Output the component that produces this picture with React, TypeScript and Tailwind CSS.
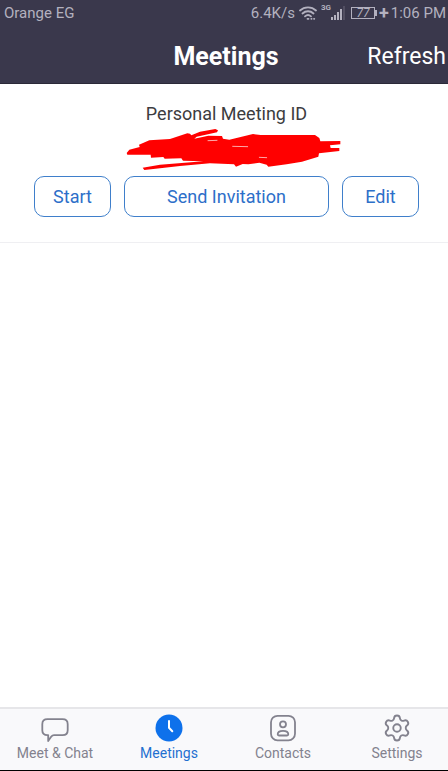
import type { ReactNode } from "react";
import clsx from "clsx";
import { Settings } from "lucide-react";

type Tab = {
  label: string;
  active?: boolean;
  icon: ReactNode;
};

function ChatIcon() {
  return (
    <svg viewBox="0 0 28 28" className="size-7" fill="none" stroke="currentColor" strokeWidth="1.8" strokeLinejoin="round" aria-hidden="true">
      <path d="M6.500 5.200h15c3.500 0 5.200 1.700 5.200 5v6c0 3.300-1.700 5-5.200 5h-8.500c-1.300 0-2 .5-2.700 1.400l-3.100 4.400v-5.800h-.7c-3.500 0-5.200-1.700-5.200-5v-6c0-3.300 1.700-5 5.200-5Z" />
    </svg>
  );
}

function ClockIcon() {
  return (
    <svg viewBox="0 0 28 28" className="size-7" fill="none" aria-hidden="true">
      <circle cx="14" cy="14" r="13.5" fill="#0e71eb" />
      <path d="M14 7v6.800l3.300 3.400" stroke="#fff" strokeWidth="2" strokeLinecap="round" strokeLinejoin="round" />
    </svg>
  );
}

function ContactIcon() {
  return (
    <svg viewBox="0 0 28 28" className="size-7" fill="none" stroke="currentColor" strokeWidth="1.8" aria-hidden="true">
      <rect x="2" y="1.8" width="24" height="24.5" rx="6.5" />
      <circle cx="14" cy="10.3" r="3" />
      <path d="M8.700 20.300c0-2.400 2.200-3.500 5.300-3.500s5.300 1.100 5.300 3.500c0 .8-.5 1.200-1.300 1.200h-8c-.8 0-1.300-.4-1.300-1.200Z" />
    </svg>
  );
}

function WifiIcon() {
  return (
    <svg viewBox="0 0 18 14" className="h-3.5 w-[18px]" fill="none" stroke="currentColor" strokeWidth="1.8" strokeLinecap="round" aria-hidden="true">
      <path d="M1 4.500C5.500.2 12.500.2 17 4.500M3.500 7.500c3.200-3 7.800-3 11 0M6 10.300c1.800-1.600 4.200-1.600 6 0" />
      <path d="M8.500 12.800h1M12.300 12.800h.3M15 12.800h.3" />
    </svg>
  );
}

function SignalIcon() {
  return (
    <svg viewBox="0 0 14 14" className="h-3.5 w-3.5" fill="currentColor" aria-hidden="true">
      <path d="M0 11h2v3H0zM3 9h2v5H3zM6 6h2v8H6zM9 3h2v11H9z" />
      <path d="M12.500 0h1v14h-1z" opacity=".4" />
    </svg>
  );
}

function Scribble() {
  return (
    <svg viewBox="78 114 648 126" className="ml-3.5 h-[42px] w-[216px]" fill="#f00" aria-hidden="true">
      <path d="M80 189 88 179 119 171 117 164 148 151 210 147 262 130 270 131 274 136 300 125 346 117 354 121 351 127 290 140 283 146 325 137 366 138 369 146 388 149 459 132 482 135 645 135 658 144 661 154 721 153 721 163 690 166 692 174 718 174 718 183 657 190 655 200 606 215 560 223 505 230 500 224 478 218 445 223 428 222 408 230 402 223 330 220 240 228 180 235 133 240 128 233 180 224 310 214 249 212 244 205 194 206 190 201 153 203 152 194 82 194Z" />
      <path d="M398 169 443 170M324 152 351 151M478 202 500 203" stroke="#fff" strokeWidth="2" strokeLinecap="round" />
    </svg>
  );
}

const tabs: Tab[] = [
  { label: "Meet & Chat", icon: <ChatIcon /> },
  { label: "Meetings", icon: <ClockIcon />, active: true },
  { label: "Contacts", icon: <ContactIcon /> },
  { label: "Settings", icon: <Settings className="-my-px size-[30px]" strokeWidth={1.5} aria-hidden="true" /> },
];

const outlineButton = "h-[41px] rounded-[10px] border border-[#3f7fcb] text-lg text-[#2d6fc9]";

export default function App() {
  return (
    <div className="flex min-h-screen flex-col overflow-hidden bg-white font-[Roboto,sans-serif]">
      <header className="border-b border-[#2b2938] bg-[#3a384c]">
        <div className="flex h-[26px] items-center justify-between pr-0.5 pl-1 text-[15px] text-[#b3b1bf]">
          <span>Orange EG</span>
          <div className="flex items-center">
            <span>6.4K/s</span>
            <span className="ml-1"><WifiIcon /></span>
            <span className="ml-1 self-start text-[8px] leading-3 font-bold">3G</span>
            <SignalIcon />
            <span className="ml-1.5 flex h-3 w-6 items-center justify-center border border-current text-xs italic">77</span>
            <span className="h-1.5 w-0.5 bg-current" />
            <span className="mx-0.5 text-lg leading-none font-bold">+</span>
            <span className="whitespace-nowrap">1:06 PM</span>
          </div>
        </div>
        <div className="grid h-[57px] grid-cols-[1fr_auto_1fr] items-center pl-1 text-white">
          <h1 className="col-start-2 pt-1 text-[25px] leading-8 font-bold">Meetings</h1>
          <button type="button" className="justify-self-end pt-1 pr-0.5 text-[23px] leading-8">Refresh</button>
        </div>
      </header>

      <main className="flex-1">
        <section className="flex flex-col items-center border-b border-[#efeff2] pt-4 pr-[29px] pb-[25px] pl-[34px]">
          <h2 className="text-lg leading-7 text-[#3c3c40]">Personal Meeting ID</h2>
          <Scribble />
          <div className="mt-1.5 flex w-full gap-[13px]">
            <button type="button" className={clsx(outlineButton, "w-[77px]")}>Start</button>
            <button type="button" className={clsx(outlineButton, "flex-1")}>Send Invitation</button>
            <button type="button" className={clsx(outlineButton, "w-[77px]")}>Edit</button>
          </div>
        </section>
      </main>

      <nav className="border-t-2 border-b border-t-[#e6e6e9] border-b-black bg-[#f9f9fb]">
        <ul className="-mr-1.5 -ml-0.5 grid grid-cols-4">
          {tabs.map((tab) => (
            <li key={tab.label}>
              <a
                href="#"
                aria-current={tab.active ? "page" : undefined}
                className={clsx("flex flex-col items-center pt-[5px] pb-[7px] text-sm", tab.active ? "text-[#1f70d0]" : "text-[#83828e]")}
              >
                {tab.icon}
                <span className="mt-px">{tab.label}</span>
              </a>
            </li>
          ))}
        </ul>
      </nav>
    </div>
  );
}
